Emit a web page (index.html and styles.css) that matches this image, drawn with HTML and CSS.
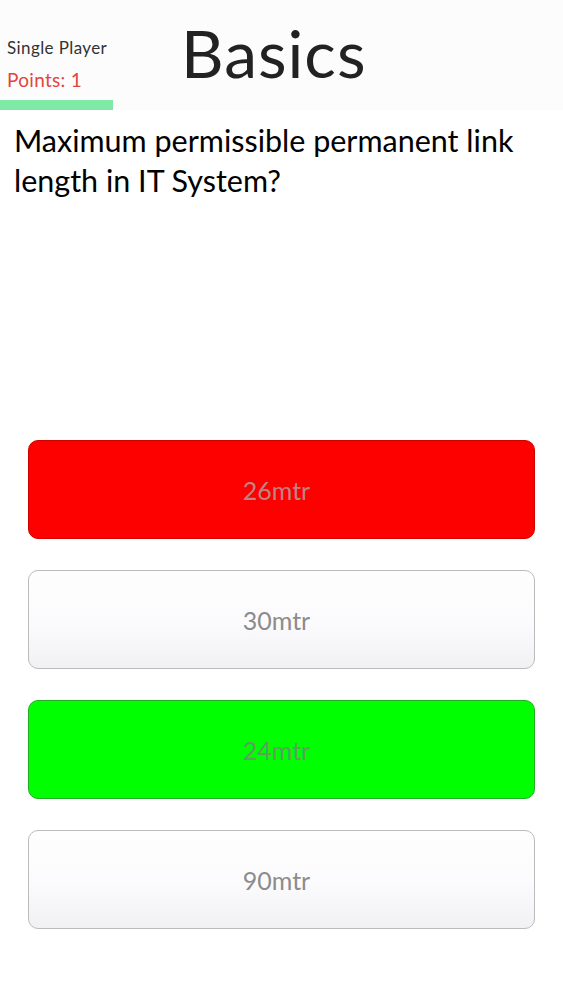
FILE: index.html
```html
<!DOCTYPE html>
<html lang="en">
<head>
    <meta charset="UTF-8">
    <meta name="viewport" content="width=device-width, initial-scale=1.0">
    <title>Quiz - Basics</title>
    <link rel="stylesheet" href="styles.css">
</head>
<body>

<div class="header">
    <div class="player-info">
        <div class="mode">Single Player</div>
        <div class="points">Points: 1</div>
        <div class="progress"></div>
    </div>
    <h1 class="category">Basics</h1>
</div>

<div class="question">Maximum permissible permanent link length in IT System?</div>

<div class="answers">
    <div class="answer wrong">26mtr</div>
    <div class="answer">30mtr</div>
    <div class="answer right">24mtr</div>
    <div class="answer">90mtr</div>
</div>

</body>
</html>
```

FILE: styles.css
```css
body {
    margin: 0;
    font-family: Lato, "Open Sans", sans-serif;
    background: #fff;
    color: #111;
}
.header {
    display: flex;
    align-items: flex-start;
    height: 110px;
    background: #fcfcfc;
}
.player-info {
    width: 113px;
    padding-top: 37px;
}
.mode {
    padding-left: 7px;
    font-size: 17px;
    letter-spacing: 0.4px;
    color: #333;
    line-height: 22px;
    white-space: nowrap;
}
.points {
    padding-left: 7px;
    font-size: 19px;
    letter-spacing: 0.3px;
    color: #e0463f;
    line-height: 24px;
    margin-top: 9px;
}
.progress {
    height: 10px;
    background: #7eeaa6;
    margin-top: 8px;
}
.category {
    margin: 16px 0 0 68px;
    font-size: 66px;
    letter-spacing: 1px;
    font-weight: 400;
    color: #222;
    line-height: 74px;
}
.question {
    padding: 10px 20px 0 14px;
    font-size: 30.5px;
    line-height: 40px;
    color: #000;
}
.answers {
    display: flex;
    flex-direction: column;
    gap: 31px;
    margin: 240px 28px 0 28px;
}
.answer {
    height: 97px;
    border: 1px solid #bbb;
    border-radius: 10px;
    display: flex;
    align-items: center;
    justify-content: center;
    padding-right: 10px;
    font-size: 25px;
    color: #8c8c8c;
    background: linear-gradient(#fefefe, #fbfbfd 55%, #f1f1f3);
}
.answer.wrong {
    background: #fd0000;
    border-color: #d00000;
    color: #c08484;
}
.answer.right {
    background: #00ff00;
    border-color: #22b022;
    color: #5ca05c;
}
```
